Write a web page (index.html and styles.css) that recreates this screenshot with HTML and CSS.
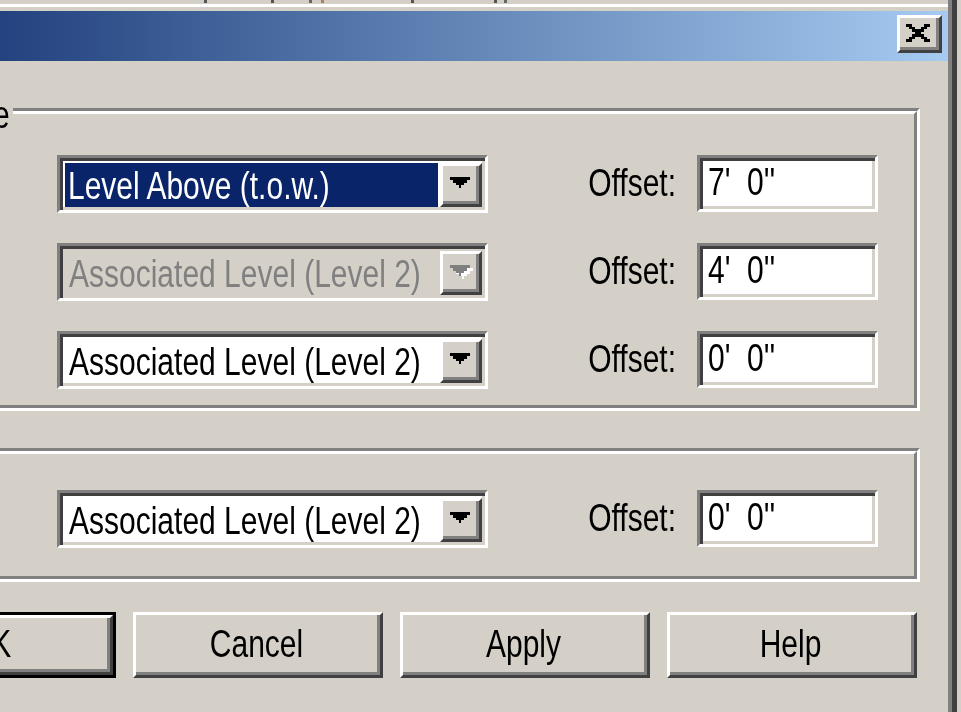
FILE: index.html
```html
<!DOCTYPE html>
<html>
<head>
<meta charset="utf-8">
<link rel="stylesheet" href="styles.css">
</head>
<body>
<div class="screen">
  <div class="window">
    <div class="frame">
      <div class="topstrip"></div>
      <div class="hilite"></div>
      <div class="titlebar">
        <div class="close">
          <svg class="xicon" viewBox="0 0 8 7" preserveAspectRatio="none" shape-rendering="crispEdges">
            <path d="M0 0h2v1h1v1h2v-1h1v-1h2v1h-1v1h-1v1h-1v1h1v1h1v1h1v1h-2v-1h-1v-1h-2v1h-1v1h-2v-1h1v-1h1v-1h1v-1h-1v-1h-1v-1h-1z" fill="#000"/>
          </svg>
        </div>
      </div>
      <div class="body">
        <div class="group g1">
          <span class="glabel"><span class="t">e</span></span>
          <div class="group-in">
            <div class="rows">
              <div class="combo"><div class="combo-in"><div class="field sel"><span class="t">Level Above (t.o.w.)</span></div><div class="drop"><svg class="arrow" viewBox="0 0 7 4" preserveAspectRatio="none" shape-rendering="crispEdges"><path d="M0 0H7V1H6V2H5V3H4V4H3V3H2V2H1V1H0Z"/></svg></div></div></div>
              <div class="olabel"><span class="t">Offset:</span></div>
              <div class="tbox"><span class="t">7'  0''</span></div>

              <div class="combo"><div class="combo-in dis"><div class="field"><span class="t">Associated Level (Level 2)</span></div><div class="drop"><svg class="arrow" viewBox="0 0 7 4" preserveAspectRatio="none" shape-rendering="crispEdges"><path d="M0 0H7V1H6V2H5V3H4V4H3V3H2V2H1V1H0Z"/></svg></div></div></div>
              <div class="olabel"><span class="t">Offset:</span></div>
              <div class="tbox"><span class="t">4'  0''</span></div>

              <div class="combo"><div class="combo-in"><div class="field"><span class="t">Associated Level (Level 2)</span></div><div class="drop"><svg class="arrow" viewBox="0 0 7 4" preserveAspectRatio="none" shape-rendering="crispEdges"><path d="M0 0H7V1H6V2H5V3H4V4H3V3H2V2H1V1H0Z"/></svg></div></div></div>
              <div class="olabel"><span class="t">Offset:</span></div>
              <div class="tbox"><span class="t">0'  0''</span></div>
            </div>
          </div>
        </div>

        <div class="group g2">
          <div class="group-in">
            <div class="rows">
              <div class="combo"><div class="combo-in"><div class="field"><span class="t">Associated Level (Level 2)</span></div><div class="drop"><svg class="arrow" viewBox="0 0 7 4" preserveAspectRatio="none" shape-rendering="crispEdges"><path d="M0 0H7V1H6V2H5V3H4V4H3V3H2V2H1V1H0Z"/></svg></div></div></div>
              <div class="olabel"><span class="t">Offset:</span></div>
              <div class="tbox"><span class="t">0'  0''</span></div>
            </div>
          </div>
        </div>

        <div class="buttons">
          <div class="btn default"><div class="btn-in"><span class="t">OK</span></div></div>
          <div class="btn"><div class="btn-in"><span class="t">Cancel</span></div></div>
          <div class="btn"><div class="btn-in"><span class="t">Apply</span></div></div>
          <div class="btn"><div class="btn-in"><span class="t">Help</span></div></div>
        </div>
      </div>
    </div>
  </div>
</div>
</body>
</html>
```

FILE: styles.css
```css
* { box-sizing: border-box; }
html, body { margin: 0; padding: 0; background: #d4d0c8; }

.screen {
  width: 961px;
  height: 712px;
  overflow: hidden;
  background: #d4d0c8;
  font-family: "Liberation Sans", Arial, sans-serif;
  font-size: 30px;
  line-height: 30px;
  color: #000;
}

.t {
  display: inline-block;
  transform: scaleY(1.3);
  white-space: pre;
}

.window {
  width: 957px;
  height: 712px;
  border-right: 5px solid #404040;
}
.frame {
  height: 100%;
  border-right: 4px solid #808080;
}

.topstrip {
  height: 4px;
  background-color: #d4d0c8;
  background-image:
    linear-gradient(#555, #555), linear-gradient(#555, #555),
    linear-gradient(#666, #666), linear-gradient(#b08060, #b08060),
    linear-gradient(#555, #555), linear-gradient(#555, #555),
    linear-gradient(#666, #666);
  background-repeat: no-repeat;
  background-size: 3px 3px;
  background-position: 204px 0, 271px 0, 309px 0, 321px 0, 411px 0, 494px 0, 504px 0;
}
.hilite {
  height: 3px;
  background: #fff;
}

.titlebar {
  margin-top: 4px;
  height: 50px;
  background: linear-gradient(to right, #23427f 0%, #6487b8 50%, #a6caf0 100%);
  display: flex;
  justify-content: flex-end;
  align-items: flex-start;
}
.close {
  margin-top: 4px;
  margin-right: 6px;
  width: 45px;
  height: 38px;
  background: #d4d0c8;
  border: 3px solid;
  border-color: #fff #404040 #404040 #fff;
  box-shadow: inset -3px -3px 0 #808080;
  display: flex;
  align-items: center;
  justify-content: center;
  padding: 0 3px 3px 0;
}
.xicon {
  width: 24px;
  height: 18px;
  display: block;
}

/* group boxes (etched) */
.group {
  position: relative;
  width: 930px;
  margin-left: -10px;
  border: 3px solid;
  border-color: #808080 #fff #fff #808080;
}
.group-in {
  border: 3px solid;
  border-color: #fff #808080 #808080 #fff;
}
.g1 { margin-top: 47px; }
.g1 .group-in { padding: 41px 0 16px 61px; }
.g2 { margin-top: 37px; }
.g2 .group-in { padding: 36px 0 28px 61px; }

.glabel {
  position: absolute;
  left: 0;
  top: -11px;
  line-height: 30px;
  padding-right: 3px;
  background: #d4d0c8;
}

.rows {
  display: grid;
  grid-template-columns: 431px 209px 181px;
  grid-auto-rows: 58px;
  row-gap: 30px;
}

/* sunken fields */
.combo, .tbox {
  border: 3px solid;
  border-color: #808080 #fff #fff #808080;
  box-shadow: inset 3px 3px 0 #404040, inset -3px -3px 0 #d4d0c8;
  padding: 3px;
  background: #fff;
}
.combo-in {
  height: 100%;
  display: flex;
  padding: 2px 0 0 2px;
  background: #fff;
}
.combo-in.dis { background: #d4d0c8; }
.field {
  flex: 1;
  display: flex;
  align-items: center;
  padding-left: 4px;
  padding-top: 1px;
}
.field.sel {
  background: #0a246a;
  color: #fff;
  padding-left: 3px;
}
.dis .field { color: #808080; }

.drop {
  width: 42px;
  margin-left: 2px;
  background: #d4d0c8;
  border: 3px solid;
  border-color: #fff #404040 #404040 #fff;
  box-shadow: inset -3px -3px 0 #808080;
  display: flex;
  align-items: center;
  justify-content: center;
  padding: 0 3px 5px 0;
}
.arrow {
  width: 20px;
  height: 11px;
  display: block;
  fill: #000;
}
.dis .arrow {
  fill: #808080;
  filter: drop-shadow(3px 3px 0 #fff);
}

.olabel {
  display: flex;
  align-items: center;
  justify-content: flex-end;
  padding-right: 21px;
  padding-bottom: 2px;
}
.tbox {
  height: 57px;
  display: flex;
  align-items: center;
  padding-left: 8px;
  padding-bottom: 6px;
}

/* buttons */
.buttons {
  display: flex;
  gap: 17px;
  margin-top: 30px;
  margin-left: -134px;
}
.btn {
  width: 250px;
  height: 66px;
  flex: none;
}
.btn-in {
  height: 100%;
  border: 3px solid;
  border-color: #fff #404040 #404040 #fff;
  box-shadow: inset -3px -3px 0 #808080;
  display: flex;
  align-items: center;
  justify-content: center;
  padding: 0 3px 3px 0;
}
.btn.default {
  border: 3px solid #000;
}
```
